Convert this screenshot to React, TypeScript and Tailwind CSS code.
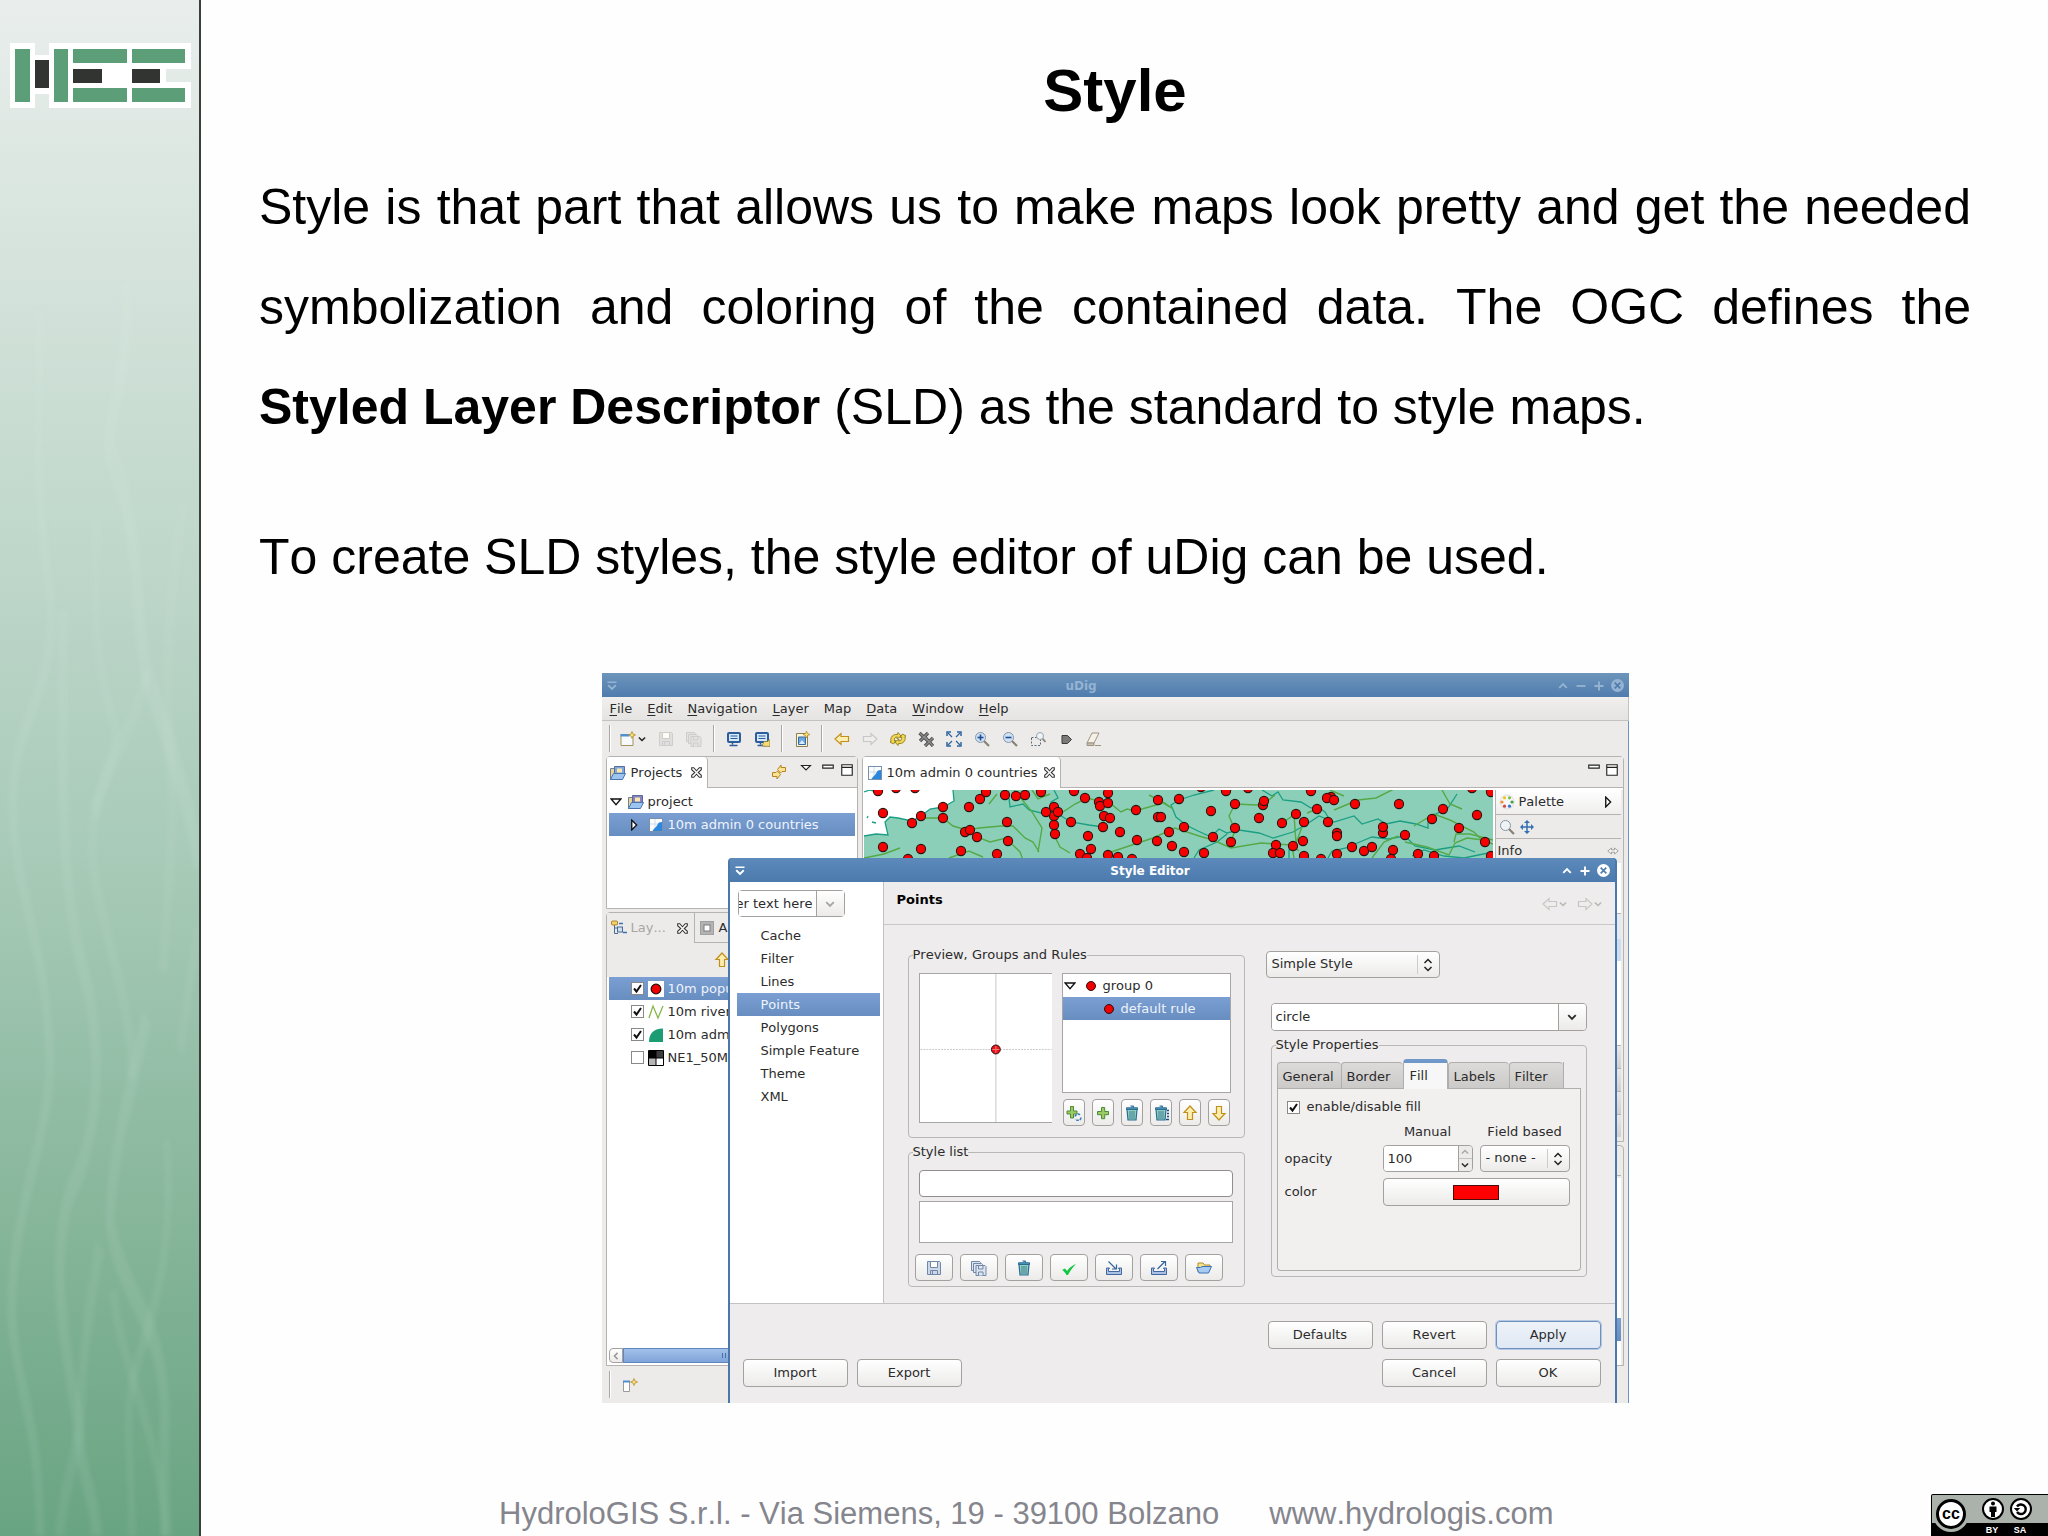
import type { ReactNode } from "react";
import { clsx } from "clsx";

/* ---------- icons ---------- */

function Icon({ children, className = "size-4" }: { children: ReactNode; className?: string }) {
  return (
    <svg viewBox="0 0 16 16" fill="none" aria-hidden="true" className={clsx("shrink-0", className)}>
      {children}
    </svg>
  );
}

const Spark = ({ x, y }: { x: number; y: number }) => (
  <path d={`M${x} ${y - 3.5}l1 2.5 2.5 1-2.5 1-1 2.5-1-2.5-2.5-1 2.5-1z`} fill="#f6e27a" stroke="#b8902c" strokeWidth=".8" />
);

const NewIcon = () => (
  <Icon>
    <path d="M1 3.5h12v11H1z" fill="#f6faff" stroke="#a3925c" />
    <path d="M.5 3h9v2.5h-9z" fill="#4f8fd0" />
    <Spark x={12} y={4} />
  </Icon>
);

const Floppy = ({ stroke, fill }: { stroke: string; fill: string }) => (
  <g stroke={stroke}>
    <path d="M1.5 1.5h12l1 1v12h-13z" fill={fill} />
    <path d="M4.5 1.5h7v6h-7z" fill="#fdfdf4" />
    <path d="M4.5 14.5v-4h7v4M6.5 11v3" />
  </g>
);

const SaveIcon = ({ dim = false }: { dim?: boolean }) => (
  <Icon>
    <Floppy stroke={dim ? "#cfcdcb" : "#7187a8"} fill={dim ? "#e0dfde" : "#ccd8ea"} />
  </Icon>
);

const SaveAllIcon = ({ dim = false }: { dim?: boolean }) => (
  <Icon>
    <g stroke={dim ? "#cfcdcb" : "#7187a8"} fill={dim ? "#e3e2e1" : "#dde5f0"}>
      <path d="M.5 1.5h8l1 1v8h-9z" />
      <path d="M2.5 3.5h8l1 1v8h-9z" />
      <path d="M5 5.5h9l1 1v9H5z" />
      <path d="M7.500 5.500h4.500v3.500h-4.500zM7.500 15.500v-3.500h4.500v3.500" />
    </g>
  </Icon>
);

const MonitorIcon = ({ link = false }: { link?: boolean }) => (
  <Icon>
    <rect x="2" y="2" width="12" height="9" rx="1" fill="#d7e8f8" stroke="#2b5c9c" strokeWidth="2" />
    <path d="M4.500 5h7M4.500 7.500h7" stroke="#2b5c9c" />
    <path d="M6.500 11v2.500M3.500 14.500h8" stroke="#2b5c9c" strokeWidth="1.500" />
    {link && <path d="M8 15l2-4.500h4l.5-1.500h1.500v6.500z" fill="#f5dc78" stroke="#8b7a3a" strokeWidth=".8" />}
  </Icon>
);

const MapDocIcon = () => (
  <Icon>
    <path d="M2.500 2.500h11v13h-11z" fill="#fdf6d8" stroke="#8b7f55" />
    <path d="M4.500 6h7v7.500h-7z" fill="#6aa6e0" stroke="#3a6aa5" />
    <path d="M5 13l3-4 3 4z" fill="#d8ecfa" />
    <Spark x={12.500} y={3.500} />
  </Icon>
);

const Arrow = ({ dir, dim = false, className }: { dir: "left" | "right" | "up" | "down"; dim?: boolean; className?: string }) => {
  const shapes = {
    left: "M1 8l6-5.500v3h7.500v5H7v3z",
    right: "M15 8L9 2.500v3H1.500v5H9v3z",
    up: "M8 1l6 6.500h-3.500v7h-5v-7H2z",
    down: "M8 15l6-6.500h-3.500v-7h-5v7H2z",
  };
  return (
    <Icon className={className}>
      <path d={shapes[dir]} fill={dim ? "#efedec" : "#fdeeb0"} stroke={dim ? "#c9c7c5" : "#c0901c"} strokeWidth="1.200" />
    </Icon>
  );
};

const SyncIcon = () => (
  <Icon>
    <path d="M1 10.500C0 6 3 3 7.500 3.500L8 1.500 11 5 7 8l.3-2C5 5.800 4 7.500 4.500 10l1.500-.5L3.500 13 0 11z" fill="#f2d750" stroke="#8f7a1d" strokeWidth=".9" />
    <path d="M15 5.500c1 4.500-2 7.500-6.500 7L8 14.500 5 11l4-3-.3 2c2.300.2 3.300-1.500 2.800-4L10 6.500 12.500 3 16 5z" fill="#f2d750" stroke="#8f7a1d" strokeWidth=".9" />
  </Icon>
);

const StopIcon = () => (
  <Icon>
    <path d="M1.500 2l8.500 8M10 2l-8 8M7 6l8 9M15 7l-8 8" stroke="#4a4a4a" strokeWidth="3.200" />
    <path d="M1.500 2l8.500 8M10 2l-8 8M7 6l8 9M15 7l-8 8" stroke="#8c8c8c" strokeWidth="1.400" />
  </Icon>
);

const ExtentIcon = () => (
  <Icon>
    <path d="M1 5V1h4M11 1h4v4M15 11v4h-4M5 15H1v-4" stroke="#2d659f" strokeWidth="1.500" />
    <path d="M2 2l4 4M14 2l-4 4M14 14l-4-4M2 14l4-4" stroke="#2d659f" strokeWidth="1.200" />
  </Icon>
);

const ZoomIcon = ({ sign }: { sign?: "in" | "out" }) => (
  <Icon>
    <path d="M10 10l5 5" stroke="#8a8174" strokeWidth="2.200" />
    <circle cx="6.500" cy="6.500" r="5" fill={sign ? "#cfe2f5" : "#eef3f5"} stroke="#8795a8" />
    {sign && <path d="M3.500 6.500h6" stroke="#1f4f94" strokeWidth="1.600" />}
    {sign === "in" && <path d="M6.500 3.500v6" stroke="#1f4f94" strokeWidth="1.600" />}
  </Icon>
);

const ZoomBoxIcon = () => (
  <Icon>
    <path d="M1.500 6.500h9v8h-9z" stroke="#5c6b7c" strokeDasharray="2 1.500" />
    <path d="M12 7l3.500 4" stroke="#8a8174" strokeWidth="1.800" />
    <circle cx="10" cy="5" r="3.500" fill="#eef3f5" stroke="#9aa5b0" />
  </Icon>
);

const TagIcon = () => (
  <Icon>
    <path d="M4 4.500h5.500l4 4-4 4H4z" fill="#7a7a7a" stroke="#3a3a3a" />
  </Icon>
);

const EraserIcon = () => (
  <Icon>
    <path d="M6 2h7l-5 10H1z" fill="#f5f1e6" stroke="#9c9484" />
    <path d="M1 12h7v2.500H1z" fill="#c9c0ac" stroke="#9c9484" />
    <path d="M9 14.500h6" stroke="#9c9484" />
  </Icon>
);

const FolderIcon = ({ tint }: { tint: string }) => (
  <Icon>
    <path d="M.5 3.500h5v11h-5z" fill="#e8d690" stroke="#6e7ea0" />
    <path d="M4.500 1.500h10v9h-10z" fill={tint} stroke="#5a6d9a" />
    <path d="M7 3.500h5v4H7z" fill="#f8e9a8" />
    <path d="M.5 14.500l3-6h12l-3 6z" fill="#9cc6f0" stroke="#4a74b0" />
  </Icon>
);

const MapIcon = () => (
  <Icon>
    <rect x="1.500" y="1.500" width="13" height="13" fill="#fbfdff" stroke="#7a91ab" />
    <path d="M2 7h12M7 2v12" stroke="#cfdbe8" />
    <path d="M14 5c-3 0-4 1-5 3.500-1 2-3 2.500-4.500 5.500H14z" fill="#2b87dd" />
  </Icon>
);

const SyncArrowsIcon = () => (
  <Icon>
    <path d="M6.500 5.500L10 1v2.500h4.500v4H11L9.500 9z" fill="#fbe296" stroke="#b5851c" />
    <path d="M9.500 10.500L6 15v-2.500H1.500v-4H5L6.500 7z" fill="#fbe296" stroke="#b5851c" />
  </Icon>
);

const CloseTab = () => (
  <Icon className="size-[11px]">
    <path d="M1 1h3l4 4.500L12 1h3v3l-4.500 4 4.500 4v3h-3l-4-4.500L4 15H1v-3l4.500-4L1 4z" fill="#fff" stroke="#333" strokeWidth="1.500" />
  </Icon>
);

const ViewMenu = () => (
  <Icon className="size-3">
    <path d="M2 2h12l-6 6z" fill="#fff" stroke="#222" strokeWidth="1.500" />
  </Icon>
);
const Minimize = () => (
  <Icon className="size-3">
    <path d="M1 1.500h14v4H1z" fill="#fff" stroke="#222" strokeWidth="1.500" />
  </Icon>
);
const Maximize = () => (
  <Icon className="size-3">
    <path d="M1 1h14v14H1zM1 4.500h14" fill="#fff" stroke="#222" strokeWidth="1.500" />
  </Icon>
);

const Expander = ({ open }: { open: boolean }) => (
  <Icon className="size-3">
    <path d={open ? "M1.500 4h13L8 11.500z" : "M5 1.500v13L11.500 8z"} fill="#fff" stroke="#111" strokeWidth="1.800" />
  </Icon>
);

const LayersIcon = () => (
  <Icon>
    <path d="M3.500 5v8.500H7M3.500 8H7" stroke="#4a6a94" />
    <rect x=".5" y="1" width="6" height="4" rx="1" fill="#f4cf6c" stroke="#a8842c" />
    <path d="M8 3.500h4M12 12.500h4" stroke="#3b72b0" strokeWidth="1.500" />
    <rect x="6.500" y="7" width="5" height="5" fill="#cfe0f2" stroke="#4a6a94" />
  </Icon>
);

const AreaIcon = () => (
  <Icon>
    <rect x="1.500" y="1.500" width="13" height="13" fill="#b3b3b3" stroke="#a0a0a0" />
    <rect x="5" y="5" width="6" height="6" fill="#fff" stroke="#7c7c7c" />
  </Icon>
);

const Dot = ({ framed = false }: { framed?: boolean }) => (
  <Icon className={framed ? "size-4 bg-white" : "size-3"}>
    <circle cx="8" cy="8" r={framed ? 4.800 : 6} fill="#f00000" stroke="#2a0d0d" strokeWidth="1.300" />
  </Icon>
);

const RiverIcon = () => (
  <Icon>
    <path d="M1 14L5 2l5 12 5-12" stroke="#86b84a" strokeWidth="1.300" />
  </Icon>
);
const PolygonIcon = () => (
  <Icon>
    <path d="M1 15C1 7 5 1.500 15 1.500V15z" fill="#1b9c73" />
  </Icon>
);
const RasterIcon = () => (
  <Icon>
    <path d="M.5.500h15v15H.5z" fill="#fff" stroke="#000" />
    <path d="M1 1h7v7H1z" fill="#000" />
    <path d="M8 1h7v7H8z" fill="#3c3c3c" />
    <path d="M1 8h7v7H1z" fill="#b5b5b5" />
    <path d="M8 1v14M1 8h14" stroke="#000" />
  </Icon>
);

const PaletteIcon = () => (
  <Icon>
    <circle cx="8" cy="8" r="7" fill="#f7f7f7" stroke="#ddd" />
    <circle cx="5.500" cy="3.800" r="1.600" fill="#f0c420" />
    <circle cx="10.500" cy="3.800" r="1.600" fill="#7cc04a" />
    <circle cx="13" cy="8" r="1.600" fill="#3fa04a" />
    <circle cx="10.500" cy="12.200" r="1.600" fill="#3b74d0" />
    <circle cx="5.500" cy="12.200" r="1.600" fill="#d04848" />
    <circle cx="3" cy="8" r="1.600" fill="#f09030" />
  </Icon>
);

const PanIcon = () => (
  <Icon>
    <path d="M8 2v12M2 8h12" stroke="#3570b0" strokeWidth="1.500" />
    <path d="M8 1l3 3H5zM8 15l3-3H5zM1 8l3-3v6zM15 8l-3-3v6z" fill="#3570b0" />
  </Icon>
);

const PinIcon = () => (
  <Icon className="size-3">
    <path d="M6 4L1 8l5 4V9.500h4V12l5-4-5-4v2.500H6z" fill="#f6f6f6" stroke="#8a8a8a" />
  </Icon>
);

const PlusIcon = ({ refresh = false }: { refresh?: boolean }) => (
  <Icon>
    <path
      d={refresh ? "M4.500 1.500h3v4.500H11v3H7.500v4h-3V9H1V6h3.500z" : "M6.500 2.500h3.200v4h3.800v3.200H9.700v4H6.500v-4H2.500V6.500h4z"}
      fill="#9bcb62"
      stroke="#4f8a3a"
    />
    {refresh && <path d="M9 11.500a3 3 0 0 1 5.500-1M15 12.500a3 3 0 0 1-5.500 1.500" stroke="#3f7db8" strokeWidth="1.600" strokeDasharray="2.500 1" />}
  </Icon>
);

const TrashIcon = ({ all = false }: { all?: boolean }) => (
  <Icon>
    <path d="M3 4.500h10l-1 10.500H4z" fill="#8fd0bb" stroke="#2c6a94" strokeWidth="1.200" />
    <path d="M6 6v8M8 6v8M10 6v8" stroke="#2c6a94" strokeWidth=".8" />
    <path d="M2.500 2.800h11v1.700h-11zM6.500 1h3v1.500" fill="#4f9fc0" stroke="#2c6a94" />
    {all && <path d="M14 5.500h2M14 8.500h2M14 11.500h2M13 14.500h3" stroke="#1f4d88" strokeWidth="1.600" />}
  </Icon>
);

const ApplyCheck = () => (
  <Icon>
    <path d="M1 10l3-1.500 2 2.500C9 7 12 5 15 4c-3.500 3.500-6 7-8 11H5.500C4.500 13 3 11 1 10z" fill="#12c642" />
  </Icon>
);

const TrayIcon = ({ out = false }: { out?: boolean }) => (
  <Icon>
    <path d="M.5 8v6.500h15V8h-3v.5h1v3h-11v-3h1V8z" fill="#a9c1e4" stroke="#4467a0" />
    {out ? (
      <path d="M6.500 9L14 1.500M10 1.500h4.500V6" stroke="#37659f" strokeWidth="1.200" />
    ) : (
      <path d="M2.500 1.500L10 9M10.500 4.500V9H6" stroke="#37659f" strokeWidth="1.200" />
    )}
  </Icon>
);

const OpenIcon = () => (
  <Icon>
    <path d="M2 12V3h5l1.500 2H14v3" fill="#fbe28c" stroke="#b08a35" />
    <path d="M.5 7.500h4l1.500-1h9.500l-3 6.500H3z" fill="#a7cbf3" stroke="#3c70b5" />
  </Icon>
);

const FastViewIcon = () => (
  <Icon>
    <path d="M1.500 4.500h6v10h-6z" fill="#fff" stroke="#9a9a9a" />
    <path d="M1 3.500h7v2H1z" fill="#4f8fd0" />
    <Spark x={12} y={5} />
  </Icon>
);

const Chevron = ({ className = "size-3" }: { className?: string }) => (
  <Icon className={className}>
    <path d="M3 5.500l5 5 5-5" stroke="currentColor" strokeWidth="2.400" />
  </Icon>
);

const UpDown = () => (
  <Icon>
    <path d="M4.500 6L8 2.500 11.500 6M4.500 10L8 13.500 11.500 10" stroke="#222" strokeWidth="1.500" />
  </Icon>
);

/* ---------- small controls ---------- */

const face = "border border-[#a3a09d] bg-linear-to-b from-white to-[#ecebea]";

function PushButton({ children, primary = false }: { children: ReactNode; primary?: boolean }) {
  return (
    <button
      className={clsx(
        "h-7 w-[105px] rounded-sm",
        primary ? "border border-[#6f8fbd] bg-linear-to-b from-[#eef2f9] to-[#dfe8f4] ring-1 ring-[#b4c8e4]" : face
      )}
    >
      {children}
    </button>
  );
}

function IconButton({ label, children, wide = false }: { label: string; children: ReactNode; wide?: boolean }) {
  return (
    <button aria-label={label} className={clsx("flex h-[27px] items-center justify-center rounded", face, wide ? "w-[38px]" : "w-[22px]")}>
      {children}
    </button>
  );
}

function CheckBox({ id, checked = false }: { id: string; checked?: boolean }) {
  return (
    <span className="relative flex size-[13px] shrink-0">
      <input id={id} type="checkbox" defaultChecked={checked} className="peer size-[13px] appearance-none border border-[#8b8987] bg-white" />
      <svg viewBox="0 0 13 13" fill="none" className="pointer-events-none absolute inset-0 hidden peer-checked:block">
        <path d="M3 6.500l2.500 3L10 3" stroke="#111" strokeWidth="2" />
      </svg>
    </span>
  );
}

function SelectBox({ label, value, className }: { label: string; value: string; className: string }) {
  return (
    <span className={clsx("relative flex h-[27px] rounded-sm", face, className)}>
      <select aria-label={label} className="w-full appearance-none bg-transparent px-[5px] pb-px">
        <option>{value}</option>
      </select>
      <span className="pointer-events-none absolute inset-y-[3px] right-0 flex w-[22px] items-center justify-center border-l border-[#cfcdcb]">
        <UpDown />
      </span>
    </span>
  );
}

function Group({ title, children, className }: { title: string; children: ReactNode; className?: string }) {
  return (
    <fieldset className={clsx("rounded border border-[#bab8b6] px-1", className)}>
      <legend className="h-5 leading-5">{title}</legend>
      {children}
    </fieldset>
  );
}

/* ---------- map ---------- */

const CITIES = [
  [14, 1], [32, -2], [51, -2], [19, 23], [48, 33], [57, 26], [79, 17], [79, 28], [105, 17], [116, 9], [122, 2], [141, 5],
  [152, 6], [161, 5], [177, 2], [210, 1], [221, 8], [244, 3], [235, 12], [236, 16], [244, 13], [190, 17], [190, 26], [182, 22],
  [194, 22], [190, 35], [191, 44], [207, 32], [240, 26], [246, 28], [239, 37], [143, 32], [101, 42], [106, 40], [113, 47],
  [144, 51], [19, 57], [57, 59], [44, 69], [97, 61], [133, 64], [224, 46], [227, 59], [216, 64], [223, 68], [244, 65],
  [254, 67], [268, 69], [294, 10], [315, 9], [337, -3], [272, 20], [294, 27], [297, 27], [256, 42], [273, 50], [293, 51],
  [305, 42], [308, 56], [320, 37], [320, 62], [340, 63], [347, 21], [349, 47], [362, 1], [371, 14], [371, 38], [367, 52],
  [384, -2], [399, 15], [400, 11], [395, 28], [418, 33], [412, 55], [409, 63], [416, 63], [432, 24], [447, 1], [440, 32],
  [453, 19], [439, 51], [429, 56], [440, 66], [464, 32], [467, 7], [463, 8], [470, 10], [491, 14], [473, 43], [473, 46],
  [473, 64], [457, 69], [488, 57], [500, 61], [508, 57], [519, 43], [519, 37], [535, 14], [529, 60], [527, 69], [541, 45],
  [554, 64], [570, 66], [568, 29], [579, 19], [595, 38], [613, 25], [608, -2], [621, 52], [627, 2], [627, 66],
];

function MapView() {
  return (
    <svg viewBox="0 0 629 69" preserveAspectRatio="xMinYMin slice" className="h-[69px] min-w-0 flex-1" role="img" aria-label="Map">
      <rect width="629" height="69" fill="#8ccfb9" />
      <path d="M0 0H89L90 11 79 17 66 19 57 26 48 31 34 28 26 27 21 32 24 45 12 44 0 46z" fill="#fff" />
      <g fill="none" stroke="#1a9f83" strokeWidth="1.300">
        <path d="M89 0l1 11-11 6-13 2-9 7-9 5-14-3-8-1-5 5 3 13-12-1-12 2M0 2l6-2 8 2M8 32l4 1M3 28l1-2" />
        <path d="M145 8l1 9 13-3 6 6 12 3 5-3M190 0l4 8-7 4 0 7 7 3M194 24l13 8 18 3 14 2" />
        <path d="M350 0l-20 5-15 5-8 5 5 12 10 8 12 6 13 6 8-8 8 4 12-3 20 3 14 5 20-6 14-8 12-8 15 6 20-6 8 8 16-5 8 5 14-3 16 3 12 4 0-6 8-8 12-6 9-14" />
        <path d="M398 0l10 6 6-4 5 8 18 2 10 6 6-2 8 6 6 10M330 68l5-8 18-8 10-8M464 68l4-7 14-3 16-7 10-4 16 2 17-3 10 10 20 4 24-4 16 6" />
        <path d="M425 68l0-8 4-3M548 66l12-6 20 6 20 2 29-6" />
      </g>
      <g fill="none" stroke="#55a946" strokeWidth="1.400">
        <path d="M60 28l19 0 10 8 14 4 12-2 22-2 12 0 12 12 8 4 6 10M113 47l13 5 16-4 14 14 3 8M150 0l10 12 8 10 10 16-4 24M190 45l6 12 10 6" />
        <path d="M168 0l6 9 12-5M199 22l12-8 12-6 24 6 10 8 6-3 8 2 28-8 10 6-8-6-16-8M133 4l-8 10M0 68l20-4 16-6M247 62l18-6 24-8 22-10 24 8 14 4 18 8 30-5 30 2 8 6" />
        <path d="M371 14l-6 12 6 14-4 12M371 14l22 1 8-2 10-8M418 33l12-8 2 28 6-16 6-6M430 68l-2-12M453 19l-10 4M470 20l24-10 18-2 20-10M578 0l8 14 12 5M550 36l20-12 16 6 24 12 10 10M541 52l22 5 22 8 6-12 12-5 16 2 10 4M508 68l12-16 14-6" />
        <path d="M85 68l20-7 14 6M466 0l14 6M590 52l2-8 14 0 23 6" />
      </g>
      {CITIES.map(([x, y], i) => (
        <circle key={i} cx={x} cy={y} r="4.600" fill="#f80000" stroke="#2b1410" strokeWidth="1.100" />
      ))}
    </svg>
  );
}

/* ---------- uDig window ---------- */

const MENUS = ["File", "Edit", "Navigation", "Layer", "Map", "Data", "Window", "Help"];

const TOOLBAR: { label: string; icon: ReactNode }[][] = [
  [
    { label: "Save", icon: <SaveIcon dim /> },
    { label: "Save all", icon: <SaveAllIcon dim /> },
  ],
  [
    { label: "New map", icon: <MonitorIcon /> },
    { label: "Open map", icon: <MonitorIcon link /> },
  ],
  [{ label: "New page", icon: <MapDocIcon /> }],
  [
    { label: "Back", icon: <Arrow dir="left" /> },
    { label: "Forward", icon: <Arrow dir="right" dim /> },
    { label: "Refresh", icon: <SyncIcon /> },
    { label: "Stop", icon: <StopIcon /> },
    { label: "Full extent", icon: <ExtentIcon /> },
    { label: "Zoom in", icon: <ZoomIcon sign="in" /> },
    { label: "Zoom out", icon: <ZoomIcon sign="out" /> },
    { label: "Zoom to selection", icon: <ZoomBoxIcon /> },
    { label: "Run", icon: <TagIcon /> },
    { label: "Clear", icon: <EraserIcon /> },
  ],
];

const LAYERS = [
  { name: "10m popu", icon: <Dot framed />, checked: true, selected: true },
  { name: "10m river", icon: <RiverIcon />, checked: true },
  { name: "10m adm", icon: <PolygonIcon />, checked: true },
  { name: "NE1_50M", icon: <RasterIcon />, checked: false },
];

const selectedRow = "bg-linear-to-b from-[#7b9fd3] to-[#678dc1] text-[#eef3fb]";

const Separator = () => <span className="mx-[5px] h-[27px] w-[2px] border-l border-[#a9a6a3] bg-white" />;

function TitleBar({ title, active = false }: { title: string; active?: boolean }) {
  return (
    <div
      className={clsx(
        "flex h-6 items-center pt-px text-[12px] font-bold",
        active ? "bg-linear-to-b from-[#5d8abb] to-[#4c7aad] text-white" : "bg-linear-to-b from-[#6d95bb] to-[#4f7cae] text-[#94b3d2]"
      )}
    >
      <span className="flex w-5 justify-center">
        <Icon className="size-3">
          <path d="M2 3h12" stroke="currentColor" strokeWidth="2" />
          <path d="M3 7l5 5 5-5" stroke="currentColor" strokeWidth="2.500" />
        </Icon>
      </span>
      <span className="flex-1 text-center">{title}</span>
      <span className={clsx("flex items-center justify-end gap-[6px] pr-[5px]", active ? "w-16" : "w-[88px]")}>
        <Icon className="size-3">
          <path d="M3 10.500l5-5 5 5" stroke="currentColor" strokeWidth="2.500" />
        </Icon>
        {!active && (
          <Icon className="size-3">
            <path d="M2 8h12" stroke="currentColor" strokeWidth="2.500" />
          </Icon>
        )}
        <Icon className="size-3">
          <path d="M8 2v12M2 8h12" stroke="currentColor" strokeWidth="2.500" />
        </Icon>
        <Icon className="size-[13px]">
          <circle cx="8" cy="8" r="8" fill="currentColor" />
          <path d="M4.500 4.500l7 7M11.500 4.500l-7 7" stroke="#4f7cae" strokeWidth="2" />
        </Icon>
      </span>
    </div>
  );
}

function ProjectsView() {
  return (
    <section className="flex h-[153px] flex-col rounded-t border border-[#b5b2b0] bg-white">
      <div className="flex h-[31px] bg-[#edebea]">
        <div className="flex w-[101px] items-center gap-[5px] rounded-t border-r border-[#b5b2b0] bg-white pl-[3px]">
          <FolderIcon tint="#7fa8e0" />
          <span className="w-[55px]">Projects</span>
          <CloseTab />
        </div>
        <div className="flex flex-1 items-start justify-end gap-[7px] border-b border-[#b5b2b0] pt-[7px] pr-1">
          <span className="mr-[6px]">
            <SyncArrowsIcon />
          </span>
          <span className="mr-[3px]">
            <ViewMenu />
          </span>
          <Minimize />
          <Maximize />
        </div>
      </div>
      <ul className="px-[2px] pt-[2px]">
        <li className="flex h-[23px] items-center gap-[6px] pl-px">
          <Expander open />
          <span className="flex items-center gap-1">
            <FolderIcon tint="#8a7fc0" />
            project
          </span>
        </li>
        <li className={clsx("flex h-[23px] items-center gap-[8px] pl-[19px]", selectedRow)}>
          <Expander open={false} />
          <span className="flex items-center gap-1">
            <MapIcon />
            10m admin 0 countries
          </span>
        </li>
      </ul>
    </section>
  );
}

function LayersView() {
  return (
    <section className="flex flex-1 flex-col rounded-t border border-[#b5b2b0] bg-white">
      <div className="flex h-[30px] bg-[#edebea]">
        <div className="flex w-[88px] items-center gap-1 border-r border-[#b5b2b0] pl-1 text-[#a8a6a4]">
          <LayersIcon />
          <span className="w-[42px]">Lay...</span>
          <CloseTab />
        </div>
        <div className="flex flex-1 items-center gap-1 border-b border-[#b5b2b0] pl-1">
          <AreaIcon />A
        </div>
      </div>
      <div className="flex h-[34px] items-center bg-[#edebea] pl-[107px]">
        <Arrow dir="up" />
      </div>
      <ul className="flex-1 px-[2px]">
        {LAYERS.map((layer, i) => (
          <li key={layer.name} className={clsx("flex h-[23px] items-center gap-1 pl-[22px]", layer.selected && selectedRow)}>
            <CheckBox id={`layer-${i}`} checked={layer.checked} />
            <label htmlFor={`layer-${i}`} className="flex items-center gap-1 whitespace-nowrap">
              {layer.icon}
              {layer.name}
            </label>
          </li>
        ))}
      </ul>
      <div className="mx-[2px] mb-[2px] flex h-[15px] text-[#9a9896]">
        <button aria-label="Scroll left" className={clsx("flex w-[14px] items-center justify-center rounded-l-sm", face)}>
          <Chevron className="size-[10px] rotate-90" />
        </button>
        <span className="flex flex-1 items-center gap-[2px] border border-[#5f87bd] bg-linear-to-b from-[#a3c1ea] to-[#7ea4d8] pl-[98px]">
          <span className="h-[5px] w-px bg-[#4a70a6]" />
          <span className="h-[5px] w-px bg-[#4a70a6]" />
        </span>
      </div>
    </section>
  );
}

function MapEditor() {
  return (
    <section className="flex h-[386px] flex-col rounded-t border border-[#b5b2b0] bg-white">
      <div className="flex h-[31px] bg-[#edebea]">
        <div className="flex w-[198px] items-center gap-1 rounded-t border-r border-[#b5b2b0] bg-white pl-1">
          <MapIcon />
          <span className="w-[153px]">10m admin 0 countries</span>
          <CloseTab />
        </div>
        <div className="flex flex-1 items-start justify-end gap-[6px] border-b border-[#b5b2b0] pt-[7px] pr-[5px]">
          <Minimize />
          <Maximize />
        </div>
      </div>
      <div className="flex flex-1 pt-[2px] pl-px">
        <MapView />
        <div className="ml-[2px] flex w-[128px] flex-col border-l border-[#b5b2b0] bg-[#edebea] pr-[2px]">
          <div className="flex h-[25px] items-center gap-1 border-b border-[#b5b2b0] bg-linear-to-b from-white to-[#efeeed] px-[3px]">
            <PaletteIcon />
            <span className="flex-1">Palette</span>
            <span className="pr-1">
              <Expander open={false} />
            </span>
          </div>
          <div className="flex h-6 items-center gap-1 border-b border-[#b5b2b0] px-[3px]">
            <ZoomIcon />
            <PanIcon />
          </div>
          <div className="flex h-6 items-center justify-between px-[2px]">
            Info
            <PinIcon />
          </div>
          <div className="h-[50px] bg-white" />
          <div className="h-[26px] border-t border-[#b5b2b0] bg-[#e3eaf3]" />
          <div className="h-[22px] bg-[#cbdcf3]" />
          <div className="h-[84px] bg-white" />
          {[0, 1, 2, 3].map((n) => (
            <div key={n} className="h-[23px] border-t border-[#b5b2b0] bg-linear-to-b from-[#e9e8e7] to-[#cfd0d2]" />
          ))}
        </div>
      </div>
    </section>
  );
}

function UDigWindow() {
  return (
    <div className="relative flex h-[730px] w-[1027px] flex-col overflow-hidden bg-[#edebea] font-['DejaVu_Sans',sans-serif] text-[13px] leading-4 text-[#2b2b2b]">
      <TitleBar title="uDig" />
      <nav className="flex h-6 items-center gap-[15px] border-r border-b border-[#c4c2c0] bg-linear-to-b from-[#f0efed] to-[#e5e4e2] pt-px pl-2">
        {MENUS.map((menu) => (
          <button key={menu}>
            {menu === "Map" ? menu : <><span className="underline underline-offset-2">{menu[0]}</span>{menu.slice(1)}</>}
          </button>
        ))}
      </nav>
      <div className="flex h-[35px] items-center border-r border-[#6c93c6] pl-[2px]">
        <Separator />
        <button aria-label="New" className="flex w-9 items-center gap-px pl-1 text-[#222]">
          <NewIcon />
          <Chevron className="size-[10px]" />
        </button>
        {TOOLBAR.map((tools, i) => (
          <div key={i} className="flex items-center">
            {i > 0 && <Separator />}
            {tools.map((tool) => (
              <button key={tool.label} aria-label={tool.label} className="flex w-7 justify-center">
                {tool.icon}
              </button>
            ))}
          </div>
        ))}
      </div>
      <div className="flex flex-1 gap-1 border-r border-[#6c93c6] pr-1 pl-1">
        <div className="flex w-[253px] flex-col gap-[3px]">
          <ProjectsView />
          <LayersView />
        </div>
        <div className="flex flex-1 flex-col gap-[3px]">
          <MapEditor />
          <section className="flex flex-1 flex-col rounded-t border border-[#b5b2b0] pr-[2px]">
            <div className="h-[30px] border-b border-[#b5b2b0]" />
            <div className="mt-[2px] h-[140px] bg-white" />
            <div className={clsx("h-[23px]", selectedRow)} />
            <div className="flex-1 bg-white" />
          </section>
        </div>
      </div>
      <div className="flex h-[37px] items-center gap-[6px] border-r border-[#6c93c6] pl-[2px]">
        <Separator />
        <FastViewIcon />
      </div>
      <StyleEditor />
    </div>
  );
}

/* ---------- style editor dialog ---------- */

const PAGES = ["Cache", "Filter", "Lines", "Points", "Polygons", "Simple Feature", "Theme", "XML"];

const TABS = [
  { name: "General", width: "w-16" },
  { name: "Border", width: "w-[62px]" },
  { name: "Fill", width: "w-[45px]" },
  { name: "Labels", width: "w-[61px]" },
  { name: "Filter", width: "w-[54px]" },
];

function PageTree() {
  return (
    <div className="w-[154px] border-r border-[#c4c2c0] bg-white pt-2">
      <div className="ml-2 flex h-[27px] w-[107px] rounded-sm border border-[#a3a09d]">
        <input aria-label="Filter pages" defaultValue="er text here" className="w-[78px] min-w-0 border-r border-[#a3a09d] bg-white -indent-[3px]" />
        <button aria-label="Filter history" className="flex flex-1 items-center justify-center bg-linear-to-b from-white to-[#ecebea] text-[#a8a6a4]">
          <Chevron />
        </button>
      </div>
      <ul className="mt-[7px] pr-[3px] pl-[7px]">
        {PAGES.map((page) => (
          <li key={page} className={clsx("flex h-[23px] items-center pl-6", page === "Points" && selectedRow)}>
            {page}
          </li>
        ))}
      </ul>
    </div>
  );
}

function RulesGroup() {
  return (
    <Group title="Preview, Groups and Rules">
      <div className="flex items-start gap-[10px] pt-2 pr-[9px] pb-[11px] pl-[6px]">
        <svg viewBox="0 0 133 150" className="h-[150px] w-[133px] border-y border-l border-[#a8a6a4] bg-white" role="img" aria-label="Preview">
          <path d="M76.500 0v150" stroke="#c9c9c9" />
          <path d="M0 76.500h133" stroke="#c9c9c9" strokeDasharray="2 1" />
          <circle cx="76.500" cy="76.500" r="4.500" fill="#f01018" stroke="#2a0d0d" />
          <path d="M73 76.500h7M76.500 73v7" stroke="#f58080" />
        </svg>
        <div className="flex flex-1 flex-col gap-[6px]">
          <ul className="h-[120px] border border-[#a8a6a4] bg-white">
            <li className="flex h-[23px] items-center gap-[9px] pl-px">
              <Expander open />
              <span className="flex items-center gap-[6px]">
                <Dot />
                group 0
              </span>
            </li>
            <li className={clsx("flex h-[23px] items-center gap-[6px] pl-10", selectedRow)}>
              <Dot />
              default rule
            </li>
          </ul>
          <div className="flex gap-[7px] pl-px">
            <IconButton label="Add group"><PlusIcon refresh /></IconButton>
            <IconButton label="Add rule"><PlusIcon /></IconButton>
            <IconButton label="Delete"><TrashIcon /></IconButton>
            <IconButton label="Delete all"><TrashIcon all /></IconButton>
            <IconButton label="Move up"><Arrow dir="up" /></IconButton>
            <IconButton label="Move down"><Arrow dir="down" /></IconButton>
          </div>
        </div>
      </div>
    </Group>
  );
}

function StyleListGroup() {
  return (
    <Group title="Style list">
      <div className="pt-2 pr-[7px] pl-[6px]">
        <input aria-label="Style name" className="h-[27px] w-full rounded border border-[#918e8b] bg-white px-1" />
        <div className="mt-1 h-[42px] border border-[#a8a6a4] bg-white" />
      </div>
      <div className="flex gap-[7px] px-[2px] pt-[11px] pb-[5px]">
        <IconButton wide label="Save style"><SaveIcon /></IconButton>
        <IconButton wide label="Save all styles"><SaveAllIcon /></IconButton>
        <IconButton wide label="Delete style"><TrashIcon /></IconButton>
        <IconButton wide label="Apply style"><ApplyCheck /></IconButton>
        <IconButton wide label="Import style"><TrayIcon /></IconButton>
        <IconButton wide label="Export style"><TrayIcon out /></IconButton>
        <IconButton wide label="Open folder"><OpenIcon /></IconButton>
      </div>
    </Group>
  );
}

function FillTab() {
  return (
    <div className="h-[182px] rounded-b border border-t-0 border-[#b0aeac] bg-[#f2f0ef] px-[7px] pt-[9px]">
      <div className="flex h-[18px] items-center gap-[7px] pl-[2px]">
        <CheckBox id="enable-fill" checked />
        <label htmlFor="enable-fill">enable/disable fill</label>
      </div>
      <div className="mt-[5px] grid grid-cols-[91px_90px_90px] items-center gap-x-[7px] gap-y-[6px]">
        <span className="col-start-2 h-[18px] text-center leading-[22px]">Manual</span>
        <span className="h-[18px] text-center leading-[22px]">Field based</span>
        <label htmlFor="opacity">opacity</label>
        <span className="flex h-[27px] overflow-hidden rounded-sm border border-[#a3a09d]">
          <input id="opacity" defaultValue="100" className="w-0 flex-1 bg-white pl-1" />
          <span className="flex w-[14px] flex-col border-l border-[#a3a09d] bg-[#ecebea]">
            <button aria-label="Increase" className="flex flex-1 items-center justify-center border-b border-[#c4c2c0] text-[#aaa]">
              <Chevron className="size-[10px] rotate-180" />
            </button>
            <button aria-label="Decrease" className="flex flex-1 items-center justify-center">
              <Chevron className="size-[10px]" />
            </button>
          </span>
        </span>
        <SelectBox label="Opacity field" value="- none -" className="w-full" />
        <label htmlFor="fill-color">color</label>
        <button id="fill-color" className={clsx("col-span-2 flex h-7 items-center justify-center rounded-sm", face)}>
          <span className="h-[15px] w-[46px] border border-[#4a0c0c] bg-[#ff0000]" />
        </button>
      </div>
    </div>
  );
}

function StyleEditor() {
  return (
    <div className="absolute top-[185px] right-3 bottom-0 left-[126px] flex flex-col rounded-t border-x-2 border-[#4a78ab] bg-[#eeecec]" role="dialog" aria-label="Style Editor">
      <TitleBar title="Style Editor" active />
      <div className="flex h-[422px] border-b border-[#c4c2c0]">
        <PageTree />
        <div className="flex-1">
          <div className="flex h-[43px] items-center justify-between border-b border-[#c9c7c5] pr-3 pb-[6px] pl-[13px]">
            <h2 className="font-bold text-black">Points</h2>
            <div className="flex gap-[9px] pt-2 text-[#b9b7b5]">
              <button aria-label="Previous page" className="flex items-center">
                <Arrow dir="left" dim />
                <Chevron className="size-[10px]" />
              </button>
              <button aria-label="Next page" className="flex items-center">
                <Arrow dir="right" dim />
                <Chevron className="size-[10px]" />
              </button>
            </div>
          </div>
          <div className="flex gap-[21px] pt-5 pl-6">
            <div className="flex w-[337px] flex-col gap-1">
              <RulesGroup />
              <StyleListGroup />
            </div>
            <div className="flex w-[321px] flex-col pt-[6px]">
              <SelectBox label="Style type" value="Simple Style" className="w-[174px]" />
              <div className="mt-[25px] ml-[5px] flex h-7 overflow-hidden rounded-sm border border-[#a3a09d]">
                <input aria-label="Symbol" defaultValue="circle" className="w-0 flex-1 bg-white pl-1" />
                <button aria-label="Symbol list" className="flex w-7 items-center justify-center border-l border-[#a3a09d] bg-linear-to-b from-white to-[#ecebea]">
                  <Chevron />
                </button>
              </div>
              <Group title="Style Properties" className="mt-1 ml-[5px]">
                <div className="px-px pt-1 pb-[5px]">
                  <div className="flex h-[30px] items-end" role="tablist">
                    {TABS.map((tab) =>
                      tab.name === "Fill" ? (
                        <button key={tab.name} role="tab" aria-selected="true" className={clsx("h-[30px] rounded-t border-x border-t-4 border-x-[#b0aeac] border-t-[#6f97c8] bg-[#f7f7f7] pb-px pl-[6px] text-left", tab.width)}>
                          {tab.name}
                        </button>
                      ) : (
                        <button key={tab.name} role="tab" aria-selected="false" className={clsx("h-[27px] rounded-t border border-r-0 border-[#b0aeac] bg-linear-to-b from-[#dddbda] to-[#cccac8] pt-[2px] pl-[5px] text-left", tab.width)}>
                          {tab.name}
                        </button>
                      )
                    )}
                    <span className="h-[27px] flex-1 border-b border-l border-[#b0aeac]" />
                  </div>
                  <FillTab />
                </div>
              </Group>
            </div>
          </div>
        </div>
      </div>
      <div className="flex flex-col gap-[10px] pt-[17px] pr-[14px] pl-[13px]">
        <div className="flex justify-end gap-[9px]">
          <PushButton>Defaults</PushButton>
          <PushButton>Revert</PushButton>
          <PushButton primary>Apply</PushButton>
        </div>
        <div className="flex justify-between">
          <div className="flex gap-[9px]">
            <PushButton>Import</PushButton>
            <PushButton>Export</PushButton>
          </div>
          <div className="flex gap-[9px]">
            <PushButton>Cancel</PushButton>
            <PushButton>OK</PushButton>
          </div>
        </div>
      </div>
    </div>
  );
}

/* ---------- slide ---------- */

function Logo() {
  return (
    <svg viewBox="0 0 181 65" className="relative mt-[43px] ml-[10px] h-[65px] w-[181px]" role="img" aria-label="HydroloGIS">
      <path d="M0 0h25v12h14V0h142v26h-25v13h25v26H39V51H25v14H0z" fill="#fff" />
      <path d="M5 6h15v53H5zM44 6h14v53H44zM63 6h54v14H63zM122 6h53v14h-53zM63 45h54v14H63zM122 45h53v14h-53z" fill="#5c9e78" />
      <path d="M25 17h14v28H25zM63 26h29v14H63zM122 26h28v14h-28z" fill="#323432" />
    </svg>
  );
}

function Sidebar() {
  return (
    <aside className="relative w-[201px] shrink-0 overflow-hidden border-r-2 border-[#3a403c] bg-linear-to-b from-[#e9eeec] via-[#a9cbb9] via-55% to-[#69a482]">
      {/* faint water weed pattern */}
      <svg viewBox="0 0 199 1536" preserveAspectRatio="none" className="absolute inset-0 size-full blur-[2px]" aria-hidden="true">
        <g transform="translate(0 150) scale(.333 .884)" fill="none" stroke="#ddf5e8">
          <path d="M380 150C390 260 320 300 330 340C430 440 400 520 440 590C480 640 560 720 600 810" strokeWidth="34" opacity=".1" />
          <path d="M115 180C130 300 90 340 150 500C180 620 20 640 40 760C60 860 140 900 150 1030C150 1120 30 1200 35 1320C50 1400 120 1440 120 1568" strokeWidth="26" opacity=".09" />
          <path d="M290 420C270 600 330 620 350 660C340 700 260 740 280 810C300 880 400 960 395 1050" strokeWidth="26" opacity=".08" />
          <path d="M440 590C420 640 330 690 280 750" strokeWidth="24" opacity=".08" />
          <path d="M190 520C180 800 200 860 265 950C310 1040 290 1120 210 1180C150 1260 190 1340 230 1430C240 1500 290 1530 290 1568" strokeWidth="30" opacity=".09" />
          <path d="M440 980C400 1060 340 1120 330 1210C360 1300 500 1320 495 1440C490 1500 500 1530 500 1568" strokeWidth="30" opacity=".09" />
          <path d="M500 1120C530 1260 440 1330 400 1390C370 1440 400 1500 395 1568" strokeWidth="22" opacity=".08" />
          <path d="M300 1240C260 1320 240 1400 240 1450C210 1500 180 1540 180 1568" strokeWidth="28" opacity=".08" />
          <path d="M340 1290C360 1380 480 1440 495 1568" strokeWidth="22" opacity=".07" />
          <path d="M550 400C500 520 490 620 520 740C510 820 500 860 490 930" strokeWidth="28" opacity=".07" />
          <path d="M598 880C570 930 560 980 540 1020" strokeWidth="24" opacity=".07" />
        </g>
      </svg>
      <Logo />
    </aside>
  );
}

function LicenseBadge() {
  return (
    <svg viewBox="0 0 117 42" className="h-[42px] w-[117px] shrink-0" role="img" aria-label="CC BY-SA">
      <path d="M0 42V2q0-2 2-2h115v42z" fill="#000" />
      <path d="M1 29V2q0-1 1-1h115v28z" fill="#aab2ab" />
      <circle cx="20" cy="20" r="18" fill="#aab2ab" />
      <circle cx="20" cy="20" r="13.500" fill="#fff" stroke="#000" strokeWidth="3" />
      <text x="20" y="25" textAnchor="middle" fontSize="16" fontWeight="700" fontFamily="Liberation Sans, sans-serif">cc</text>
      <circle cx="62" cy="15" r="10" fill="#fff" stroke="#000" strokeWidth="2" />
      <circle cx="62" cy="9.500" r="2" fill="#000" />
      <path d="M58.500 12.500h7v5.500h-1.500v5h-4v-5h-1.500z" fill="#000" />
      <circle cx="90" cy="15" r="10" fill="#fff" stroke="#000" strokeWidth="2" />
      <path d="M86 12.500a4.800 4.800 0 1 1 0 5.500" fill="none" stroke="#000" strokeWidth="2.400" />
      <path d="M82.800 14h6.400l-3.200 3.500z" fill="#000" />
      <text x="61" y="39" textAnchor="middle" fontSize="9" fontWeight="700" fill="#fff" fontFamily="Liberation Sans, sans-serif">BY</text>
      <text x="89" y="39" textAnchor="middle" fontSize="9" fontWeight="700" fill="#fff" fontFamily="Liberation Sans, sans-serif">SA</text>
    </svg>
  );
}

export default function App() {
  return (
    <div className="flex min-h-screen bg-[#fefefe] font-['Liberation_Sans',Arial,sans-serif] text-black [font-kerning:none]">
      <Sidebar />
      <div className="flex min-w-0 flex-1 flex-col">
        <main className="flex flex-col pt-[55px] pr-[77px] pl-[58px]">
          <h1 className="text-center text-[60px] leading-[72px] font-bold">Style</h1>
          <div className="mt-[30px] flex flex-col gap-[50px] text-[50px] leading-[100px]">
            <p className="text-justify">
              Style is that part that allows us to make maps look pretty and get the needed symbolization and coloring of the
              contained data. The OGC defines the <strong>Styled Layer Descriptor</strong> (SLD) as the standard to style maps.
            </p>
            <p>To create SLD styles, the style editor of uDig can be used.</p>
          </div>
          <div className="mt-[66px] flex justify-center">
            <UDigWindow />
          </div>
        </main>
        <footer className="mt-auto flex items-end justify-between pl-[298px] text-[31px] leading-[44px] text-[#85858d]">
          <p className="flex gap-[50px]">
            <span>HydroloGIS S.r.l. - Via Siemens, 19 - 39100 Bolzano</span>
            <a href="http://www.hydrologis.com">www.hydrologis.com</a>
          </p>
          <LicenseBadge />
        </footer>
      </div>
    </div>
  );
}
